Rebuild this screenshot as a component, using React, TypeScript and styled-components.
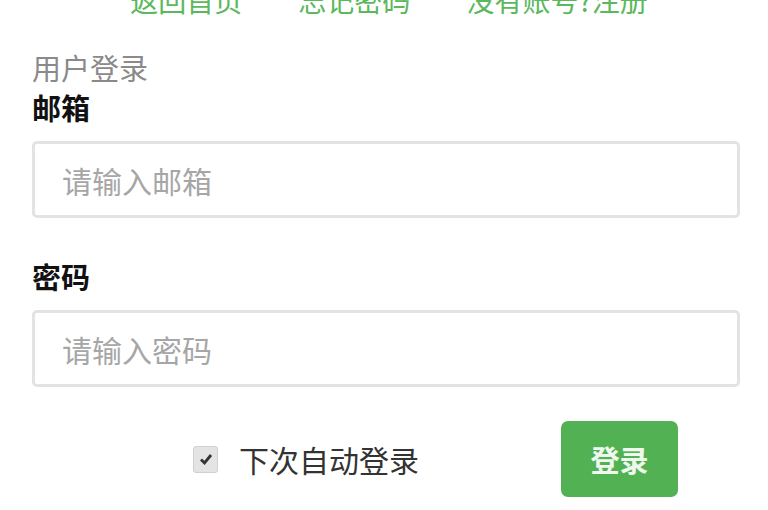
import React from 'react';
import styled, { createGlobalStyle } from 'styled-components';

const GlobalStyle = createGlobalStyle`
  html, body {
    margin: 0;
    padding: 0;
    background: #ffffff;
    overflow: hidden;
  }
  body {
    font-family: "Noto Sans CJK SC", "Noto Sans", sans-serif;
  }
`;

// Component
const App: React.FC = () => {
  return (
    <>
      <GlobalStyle />
      <Page>
        <NavRow>
          <NavLink href="#">返回首页</NavLink>
          <NavLink href="#">忘记密码</NavLink>
          <NavLink href="#">没有账号?注册</NavLink>
        </NavRow>

        <Title>用户登录</Title>

        <FieldLabel>邮箱</FieldLabel>
        <TextInput type="email" placeholder="请输入邮箱" />

        <FieldLabel spaced>密码</FieldLabel>
        <TextInput type="password" placeholder="请输入密码" />

        <ActionRow>
          <RememberLabel>
            <CheckBox>
              <svg width="16" height="16" viewBox="0 0 16 16">
                <path d="M3 8.5 L6.5 12 L13 4" fill="none" stroke="#333" strokeWidth="2.8" />
              </svg>
            </CheckBox>
            下次自动登录
          </RememberLabel>
          <LoginButton type="button">登录</LoginButton>
        </ActionRow>
      </Page>
    </>
  );
};

// Styled components
const Page = styled.div`
  display: flex;
  flex-direction: column;
  margin-top: -18px;
  padding: 0 28px 0 32px;
`;

const NavRow = styled.div`
  display: flex;
  justify-content: center;
  gap: 56px;
  line-height: 36px;
  padding-left: 6px;
`;

const NavLink = styled.a`
  font-size: 28px;
  color: #5cb85c;
  text-decoration: none;
`;

const Title = styled.div`
  margin-top: 31px;
  font-size: 29px;
  line-height: 36px;
  color: #8a8a8a;
`;

const FieldLabel = styled.div<{ spaced?: boolean }>`
  margin-top: ${props => (props.spaced ? '40px' : '4px')};
  font-size: 29px;
  line-height: 36px;
  font-weight: 700;
  color: #111;
`;

const TextInput = styled.input`
  box-sizing: border-box;
  margin-top: 16px;
  width: 100%;
  height: 77px;
  padding: 0 27px;
  border: 3px solid #e3e3e3;
  border-radius: 5px;
  background: #fff;
  font-family: inherit;
  font-size: 30px;
  color: #333;
  outline: none;

  &::placeholder {
    color: #a6a6a6;
  }
`;

const ActionRow = styled.div`
  display: flex;
  align-items: center;
  margin-top: 34px;
  padding-left: 161px;
  gap: 142px;
`;

const RememberLabel = styled.label`
  display: flex;
  align-items: center;
  gap: 21px;
  font-size: 30px;
  color: #333;
`;

const CheckBox = styled.span`
  display: flex;
  align-items: center;
  justify-content: center;
  width: 25px;
  height: 27px;
  border-radius: 3px;
  background: #e4e4e4;
  border: 1px solid #d0d0d0;
  box-sizing: border-box;
`;

const LoginButton = styled.button`
  width: 117px;
  height: 76px;
  border: none;
  border-radius: 7px;
  background: #52b152;
  color: #eef8ee;
  font-family: inherit;
  font-size: 29px;
  font-weight: 600;
  cursor: pointer;
`;

export default App;
